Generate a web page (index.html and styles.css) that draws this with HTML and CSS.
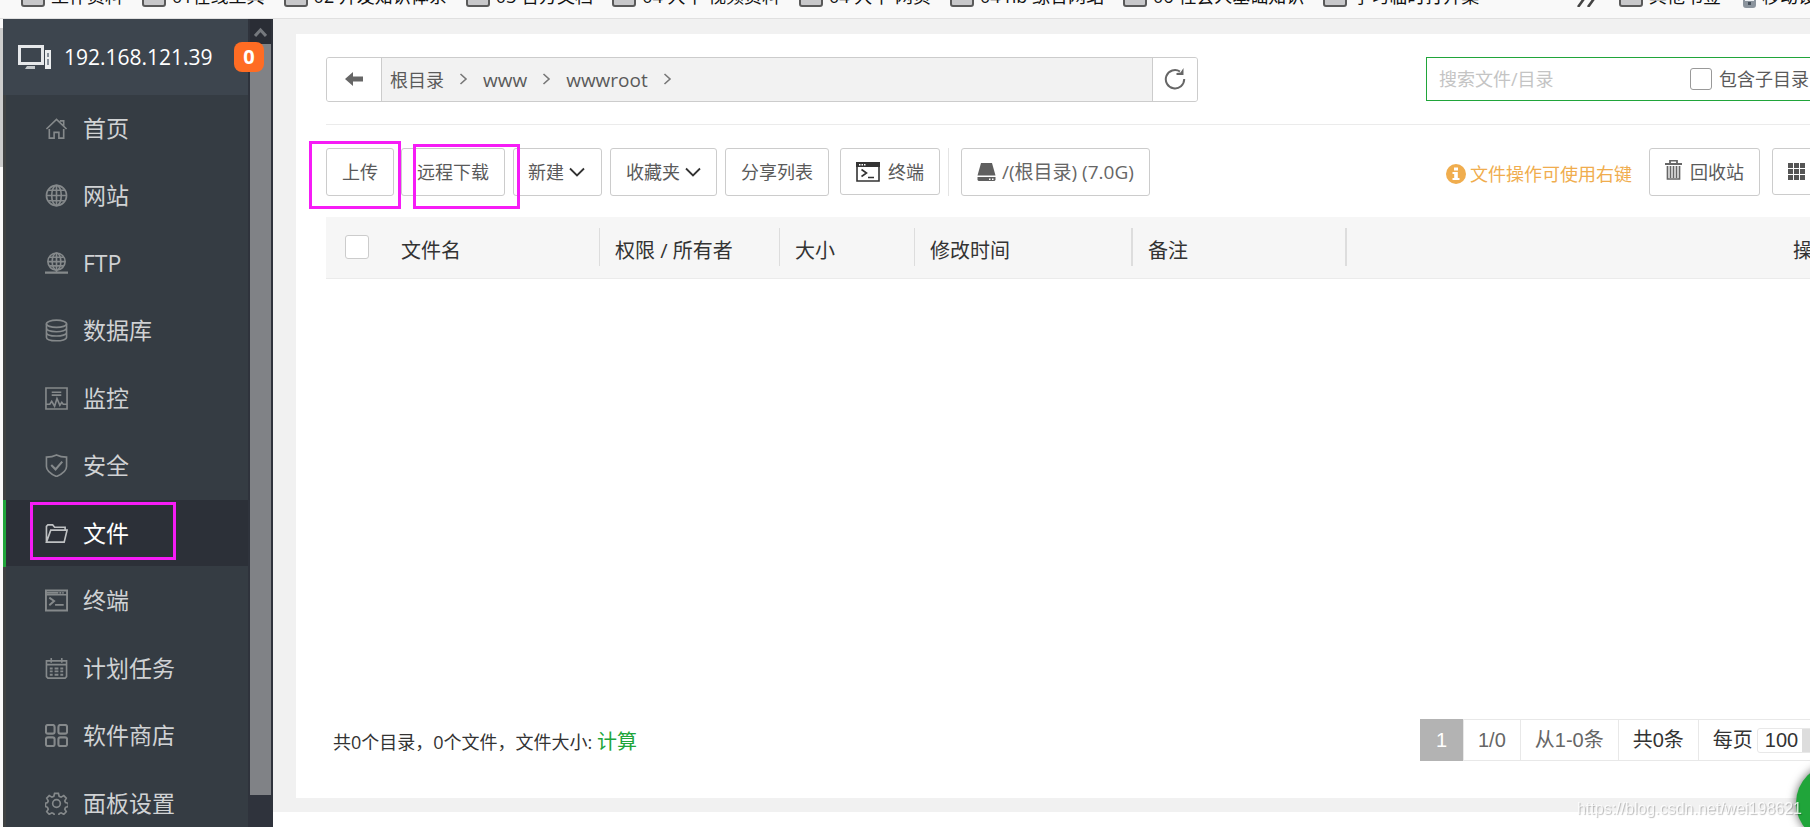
FILE: index.html
```html
<!DOCTYPE html>
<html lang="zh-CN">
<head>
<meta charset="utf-8">
<title>文件</title>
<link rel="stylesheet" href="styles.css">
</head>
<body>
<svg class="defs" aria-hidden="true">
  <symbol id="chev-right" viewBox="0 0 9 12"><path d="M1.500 1 7 6l-5.500 5" fill="none" stroke="currentColor" stroke-width="1.600"/></symbol>
  <symbol id="chev-down" viewBox="0 0 16 10"><path d="M1 1.500 8 8.500l7-7" fill="none" stroke="currentColor" stroke-width="1.800"/></symbol>
</svg>
<nav class="bookmarks" aria-label="书签">
  <div class="marks">
    <a class="mark" href="#"><span class="folder"></span>工作资料</a>
    <a class="mark" href="#"><span class="folder"></span>01在线工具</a>
    <a class="mark" href="#"><span class="folder"></span>02 开发知识体系</a>
    <a class="mark" href="#"><span class="folder"></span>03 官方文档</a>
    <a class="mark" href="#"><span class="folder"></span>04 大牛 视频资料</a>
    <a class="mark" href="#"><span class="folder"></span>04 大牛 网页</a>
    <a class="mark" href="#"><span class="folder"></span>04 nb 综合网站</a>
    <a class="mark" href="#"><span class="folder"></span>06 社会人基础知识</a>
    <a class="mark" href="#"><span class="folder"></span>学习临时打开集</a>
  </div>
  <div class="marks marks-end">
    <svg class="more" width="20" height="22" viewBox="0 0 20 22"><path d="M2 1l7 10-8 11M12 1l7 10-8 11" fill="none" stroke="#444" stroke-width="2.600"/></svg>
    <a class="mark" href="#"><span class="folder"></span>其他书签</a>
    <a class="mark" href="#"><svg width="13" height="24" viewBox="0 0 13 24"><rect x="1" y="1" width="11" height="22" rx="2" fill="#eef1f4" stroke="#8b949d" stroke-width="2"/><path d="M1 17h11v5H1z" fill="#8b949d"/><rect x="5" y="18" width="3" height="3" fill="#46505a"/></svg>移动设备上的书签</a>
  </div>
</nav>
<div class="app">
  <div class="gutter"></div>
  <aside class="sidebar">
    <div class="side-body">
      <header class="host">
        <svg width="34" height="24" viewBox="0 0 34 24"><path d="M1.500 1.500h23v17h-23z" fill="none" stroke="#e6e8ea" stroke-width="3"/><path d="M9 21h8v3H7z" fill="#c4c8cb"/><rect x="27" y="5" width="6" height="19" fill="#eceeef"/><path d="M29 8h2v4h-2zM29 14h2v6h-2z" fill="#87909a"/></svg>
        <span>192.168.121.39</span>
        <b class="badge">0</b>
      </header>
      <ul class="menu">
        <li><a href="#"><svg viewBox="0 0 24 24"><path d="M1.500 12.500 12 2.500l10.500 10M4.500 12.500v9.500h5v-6h5v6h5v-9.500M15.500 4h4v5"/></svg>首页</a></li>
        <li><a href="#"><svg viewBox="0 0 24 24"><circle cx="12" cy="12" r="10.500"/><ellipse cx="12" cy="12" rx="5" ry="10.500"/><path d="M12 1.500v21M1.500 12h21M3.500 6.500h17M3.500 17.500h17"/></svg>网站</a></li>
        <li><a href="#"><svg viewBox="0 0 24 24"><circle cx="12" cy="10" r="9"/><ellipse cx="12" cy="10" rx="4.500" ry="9"/><path d="M12 1v21M3 10h18M4.500 5.500h15M4.500 14.500h15"/><path d="M0 21.500h24M8 21.500h8" stroke-width="2.500"/></svg>FTP</a></li>
        <li><a href="#"><svg viewBox="0 0 24 24"><ellipse cx="12" cy="5" rx="10.500" ry="3.800"/><path d="M1.500 5v14c0 5 21 5 21 0V5M1.500 9.500c0 5 21 5 21 0M1.500 14c0 5 21 5 21 0"/></svg>数据库</a></li>
        <li><a href="#"><svg viewBox="0 0 24 24"><path d="M1 1h22v22H1zM7 5.500h10M7 8.500h10M1 18h4l2-3 3 5 2.500-8 3 7 2-3 1.500 2h4"/></svg>监控</a></li>
        <li><a href="#"><svg viewBox="0 0 24 24"><path d="M12 1c3 1.500 7 2.200 10.500 2.200V13c0 5-5 8-10.500 10.500C6.500 21 1.500 18 1.500 13V3.200C5 3.200 9 2.500 12 1z"/><path d="M6.500 11.500l4.500 4.500 7-8" stroke-width="2.200"/></svg>安全</a></li>
        <li class="active"><a href="#"><svg viewBox="0 0 24 24"><path d="M1.500 21V4.500L3 3h5l2 2.500h11V9M1.500 21 6 8.500h17L20 21z"/></svg>文件</a><span class="mark-box"></span></li>
        <li><a href="#"><svg viewBox="0 0 24 24"><path d="M1 1.500h22v21H1zM1 4h13M4.500 9l5 3.500-5 4.500" stroke-width="2"/><path d="M10.500 16.500h9M15 4h2M18 4h1.500M1 6h22" stroke-width="1.800"/></svg>终端</a></li>
        <li><a href="#"><svg viewBox="0 0 24 24"><path d="M1.500 4h21v16.500l-1.500 1.500H3l-1.500-1.500zM1.500 8h21M6.500 1v5M17.500 1v5"/><path d="M5 12h3M10 12h4M16 12h3M5 15h3M10 15h4M16 15h3M5 18.500h3M10 18.500h4M16 18.500h3" stroke-width="2"/></svg>计划任务</a></li>
        <li><a href="#"><svg viewBox="0 0 24 24" class="bold"><rect x="1" y="1" width="9" height="9" rx="2"/><rect x="14" y="1" width="9" height="9" rx="2"/><rect x="1" y="14" width="9" height="9" rx="2"/><rect x="14" y="14" width="9" height="9" rx="2"/></svg>软件商店</a></li>
        <li><a href="#"><svg viewBox="0 0 24 24"><circle cx="12" cy="12" r="4"/><path d="M10 1.500h4l.8 3 2 .9 2.800-1.600 2.600 2.700-1.600 2.800.8 1.700 2.900.8v3.400l-2.900.8-.8 2 1.600 2.600-2.600 2.700-2.800-1.600-2 .9-.8 2.900h-4l-.8-2.900-2-.9-2.800 1.600-2.600-2.700L3.400 18l-.8-2-2.100-.8v-3.400l2.100-.8.8-1.700-1.600-2.800 2.600-2.700 2.800 1.600 2-.9z"/></svg>面板设置</a></li>
      </ul>
    </div>
    <div class="scroll"><div class="scroll-up"><svg width="13" height="11" viewBox="0 0 13 11"><path d="M1 9l5.500-6L12 9" fill="none" stroke="#75787d" stroke-width="3"/></svg></div><div class="thumb"></div></div>
  </aside>
  <main class="content">
    <section class="panel">
      <div class="pathrow">
        <div class="path">
          <button class="path-btn back" aria-label="返回"><svg width="18" height="14" viewBox="0 0 18 14"><path d="M0 7 8 0v4.500h10v5H8V14z" fill="#666"/></svg></button>
          <div class="crumbs">
            <a href="#">根目录</a><svg class="sep"><use href="#chev-right"/></svg>
            <a class="latin" href="#">www</a><svg class="sep"><use href="#chev-right"/></svg>
            <a class="latin" href="#">wwwroot</a><svg class="sep"><use href="#chev-right"/></svg>
          </div>
          <button class="path-btn refresh" aria-label="刷新"><svg width="22" height="22" viewBox="0 0 22 22"><path d="M16 3.500A9.200 9.200 0 1 0 20.200 11" fill="none" stroke="#666" stroke-width="2"/><path d="M19.500 0v7h-7l0-2 4-.5z" fill="#666"/></svg></button>
        </div>
        <div class="search">
          <input type="text" class="search-input" placeholder="搜索文件/目录" aria-label="搜索文件/目录">
          <input type="checkbox" class="box box-sub" id="sub"><label for="sub">包含子目录</label>
        </div>
      </div>
      <div class="toolbar">
        <div class="tool"><button class="btn">上传</button><span class="mark-box mark-upload"></span></div>
        <div class="tool"><button class="btn">远程下载</button></div>
        <div class="tool"><button class="btn btn-new">新建<svg class="caret"><use href="#chev-down"/></svg></button><span class="mark-box mark-remote"></span></div>
        <button class="btn">收藏夹<svg class="caret"><use href="#chev-down"/></svg></button>
        <button class="btn">分享列表</button>
        <button class="btn btn-term"><svg width="24" height="20" viewBox="0 0 24 20"><path d="M1 1h22v18H1z" fill="#fff" stroke="#333" stroke-width="1.600"/><path d="M0 0h24v5H0z" fill="#333"/><path d="M3 2h1.500v1.500H3zM5.500 2H7v1.500H5.500zM8 2h1.500v1.500H8z" fill="#fff"/><path d="M5.500 7.500l5 3.500-5 3.500M12 15.500h6" fill="none" stroke="#333" stroke-width="1.600"/></svg>终端</button>
        <span class="rule"></span>
        <button class="btn btn-disk"><svg width="19" height="18" viewBox="0 0 19 18"><path d="M4 0h11l3.500 12.500H.5z" fill="#5f5f5f"/><path d="M.5 14h18v3l-1 1h-16l-1-1z" fill="#5f5f5f"/><path d="M12 15.500h1.500V17H12zM15 15.500h1.500V17H15z" fill="#fff"/></svg>/(根目录) (7.0G)</button>
        <div class="tools-end">
          <span class="tip"><svg width="20" height="20" viewBox="0 0 20 20"><circle cx="10" cy="10" r="10" fill="#f0ad4e"/><path d="M8 3.500h4v3H8zM6.500 8h5.300v6h1.700v2h-7v-2h1.700v-4H6.500z" fill="#fff"/></svg>文件操作可使用右键</span>
          <button class="btn btn-trash"><svg width="17" height="24" viewBox="0 0 17 24"><path d="M0 4h17M5 3.500v-3h7v3" fill="none" stroke="#666" stroke-width="1.800"/><path d="M2.500 6v13h12V6M5.500 6v12M8.500 6v12M11.500 6v12" fill="none" stroke="#666" stroke-width="1.700"/></svg>回收站</button>
          <button class="btn btn-grid" aria-label="图标视图"><svg width="17" height="17" viewBox="0 0 17 17"><path d="M0 0h5v5H0zM6 0h5v5H6zM12 0h5v5h-5zM0 6h5v5H0zM6 6h5v5H6zM12 6h5v5h-5zM0 12h5v5H0zM6 12h5v5H6zM12 12h5v5h-5z" fill="#555"/></svg></button>
        </div>
      </div>
      <div class="list">
        <table class="files">
          <colgroup><col class="c-check"><col class="c-name"><col class="c-perm"><col class="c-size"><col class="c-time"><col class="c-note"><col></colgroup>
          <thead><tr>
            <th><input type="checkbox" class="box box-all" aria-label="全选"></th>
            <th class="first"><span>文件名</span></th><th><span>权限 / 所有者</span></th><th><span>大小</span></th><th class="wide"><span>修改时间</span></th><th class="wide"><span>备注</span></th><th class="ops"><span>操作</span></th>
          </tr></thead>
        </table>
      </div>
      <footer class="foot">
        <p class="stats">共0个目录，0个文件，文件大小: <a href="#">计算</a></p>
        <div class="pager">
          <span class="cur">1</span><span>1/0</span><span>从1-0条</span><span class="dark">共0条</span>
          <span class="dark per"><label for="per">每页</label><select id="per"><option>100</option></select></span>
        </div>
      </footer>
    </section>
  </main>
</div>
<div class="bubble"></div>
<div class="watermark">https://blog.csdn.net/wei198621</div>
</body>
</html>
```
FILE: styles.css
```css
* { box-sizing: border-box; }
body {
  margin: 0;
  height: 100vh;
  display: flex;
  flex-direction: column;
  overflow: hidden;
  background: #fff;
  color: #5a5a5a;
  font: 18px/24px "Open Sans", "Noto Sans CJK SC", sans-serif;
}
a { color: inherit; text-decoration: none; }
button, input, select { font: inherit; color: inherit; margin: 0; }
svg { flex: none; }
.defs { position: absolute; width: 0; height: 0; }

/* bookmarks bar */
.bookmarks {
  flex: none;
  display: flex;
  height: 19px;
  padding-left: 21px;
  overflow: hidden;
  background: #f9f9f9;
  border-bottom: 1px solid #e0e0e0;
  color: #111;
  white-space: nowrap;
}
.marks { display: flex; align-items: center; gap: 19px; height: 30px; margin-top: -19px; }
.marks-end { gap: 22px; margin-left: auto; margin-right: -96px; }
.mark { display: flex; align-items: center; gap: 6px; }
.folder { width: 24px; height: 22px; background: #c8c8ca; border: 2px solid #5a5a5a; border-radius: 3px; }

.app { flex: 1; min-height: 0; display: flex; }
.gutter { width: 3px; flex: none; background: linear-gradient(#fafafa 9px, #cdcdcd 9px, #cdcdcd 148px, #fafafa 148px); }

/* sidebar */
.sidebar { flex: none; width: 270px; display: flex; overflow: hidden; background: #2f333c; }
.side-body { width: 245px; background: #353c43; }
.host {
  position: relative;
  display: flex;
  align-items: center;
  gap: 12px;
  height: 76px;
  padding-left: 15px;
  background: #3d454e;
  color: #fff;
  font-size: 21px;
}
.badge {
  position: absolute;
  left: 231px;
  top: 23px;
  z-index: 1;
  width: 30px;
  height: 30px;
  border-radius: 8px;
  background: #ff6c23;
  font-size: 20px;
  line-height: 30px;
  text-align: center;
}
.menu { margin: 0; padding: 0; list-style: none; color: #d0d2d4; font-size: 23px; }
.menu li { position: relative; height: 67px; border-left: 3px solid #3e4142; }
.menu li:nth-child(even) { height: 68px; }
.menu a { display: flex; align-items: center; gap: 15px; height: 66px; padding-left: 39px; }
.menu svg { width: 23px; height: 23px; fill: none; stroke: #85898b; stroke-width: 1.7; }
.menu .bold { stroke-width: 2.2; }
.menu .active { border-color: #20a53a; color: #fff; }
.menu .active a { background: #2c3038; }
.menu .active svg { stroke: #bfc1c3; }
.mark-box { position: absolute; left: 24px; top: 2px; width: 146px; height: 58px; border: 3px solid #f61cf6; pointer-events: none; }
.scroll { width: 21px; margin-left: 2px; display: flex; flex-direction: column; }
.scroll-up { height: 25px; padding: 8px 0 0 4px; background: #2a2d35; line-height: 0; }
.thumb { flex: 1; margin-bottom: 32px; background: #808286; }

/* main panel */
.content { flex: 1; min-width: 0; display: flex; margin-bottom: 15px; padding: 15px 0 14px 23px; background: #f1f1f1; overflow: hidden; }
.panel { flex: 1; min-width: 0; display: flex; flex-direction: column; margin-right: -69px; padding: 23px 30px 37px; background: #fff; }
.pathrow { display: flex; justify-content: space-between; height: 68px; border-bottom: 1px solid #ebebeb; }
.path { display: flex; width: 872px; height: 45px; border: 1px solid #ccc; border-radius: 3px; background: #f2f2f2; overflow: hidden; }
.path-btn { display: flex; align-items: center; justify-content: center; padding: 0 0 2px; border: 0; background: #fff; }
.back { width: 55px; border-right: 1px solid #ccc; }
.refresh { width: 45px; border-left: 1px solid #ccc; }
.crumbs { flex: 1; display: flex; align-items: center; gap: 15px; padding-left: 8px; }
.latin { font-size: 19px; }
.sep { width: 9px; height: 12px; margin-bottom: 2px; color: #777; }
.search { display: flex; align-items: center; width: 423px; height: 44px; border: 1px solid #20a53a; }
.search-input { width: 263px; padding: 0 12px; border: 0; outline: 0; background: none; }
.search-input::placeholder { color: #c4c4c4; opacity: 1; }
.box { appearance: none; background: #fff; border: 1px solid #ccc; border-radius: 3px; }
.box-sub { width: 22px; height: 22px; margin-right: 7px; border-color: #999; }
.box-all { display: block; width: 24px; height: 24px; margin-left: 19px; }

.toolbar { display: flex; align-items: flex-start; gap: 8px; margin: 23px 0 21px; height: 48px; }
.tool { position: relative; display: flex; }
.tool:first-child { margin-right: -1px; }
.btn { display: flex; align-items: center; height: 48px; padding: 0 15px; border: 1px solid #ccc; border-radius: 3px; background: #fff; white-space: nowrap; }
.btn-new { padding: 0 16px 0 14px; }
.caret { width: 16px; height: 10px; margin-left: 5px; color: #333; }
.mark-upload { left: -17px; top: -7px; width: 92px; height: 68px; z-index: 1; }
.mark-remote { left: -100px; top: -4px; width: 107px; height: 65px; }
.btn-term { gap: 8px; height: 47px; margin-left: 3px; }
.rule { width: 1px; height: 48px; margin-right: 4px; background: #e4e4e4; }
.btn-disk { gap: 6px; color: #666; font-size: 19px; }
.tools-end { display: flex; gap: 12px; margin-left: auto; }
.tip { display: flex; align-items: center; gap: 4px; height: 52px; margin-right: 5px; color: #f0ad4e; }
.btn-trash { gap: 8px; }
.btn-grid { width: 77px; height: 47px; }

.list { flex: 1; }
.files { width: 100%; table-layout: fixed; border-collapse: collapse; background: #f6f6f6; color: #333; font-size: 20px; }
.files th { height: 61px; padding: 0; border-bottom: 1px solid #ebebeb; font-weight: 400; text-align: left; }
.files th span { display: block; height: 38px; padding-left: 15px; line-height: 46px; border-right: 1px solid #ddd; }
.files .first span { padding-left: 0; }
.files .wide span { border-right-width: 2px; }
.files .ops span { padding-right: 16px; border: 0; text-align: right; }
.c-check { width: 75px; }
.c-name { width: 199px; }
.c-perm { width: 180px; }
.c-size { width: 135px; }
.c-time { width: 218px; }
.c-note { width: 214px; }

.foot { display: flex; align-items: center; justify-content: space-between; color: #333; }
.stats { margin: 0; padding: 4px 0 0 7px; }
.stats a { color: #20a53a; font-size: 20px; }
.pager { display: flex; width: 429px; height: 42px; border: 1px solid #e8e8e8; color: #666; font: 20px/40px "Liberation Sans", "Noto Sans CJK SC", sans-serif; white-space: nowrap; }
.pager > span { padding: 0 14px; border-left: 1px solid #e8e8e8; }
.pager > .cur { width: 43px; margin: -1px 0 -1px -1px; border: 0; background: #b3b3b3; color: #fff; line-height: 42px; text-align: center; }
.pager .dark { color: #333; }
.pager .per { display: flex; align-items: center; gap: 4px; flex: 1; }
.per select { appearance: none; width: 72px; height: 25px; padding: 0 7px; border: 1px solid #e8e8e8; border-radius: 3px; background: linear-gradient(#ddd, #ddd) right / 26px 100% no-repeat #fff; line-height: 23px; }

/* overlays */
.bubble { position: fixed; right: -64px; bottom: -15px; width: 78px; height: 78px; border-radius: 50%; background: #20a53a; box-shadow: 0 0 10px rgba(0, 0, 0, .6); }
.watermark { position: fixed; right: 8px; bottom: 6px; color: rgba(255, 255, 255, .8); font: 16px/24px "Liberation Sans", sans-serif; text-shadow: 1px 1px 1px rgba(0, 0, 0, .25); }
```
